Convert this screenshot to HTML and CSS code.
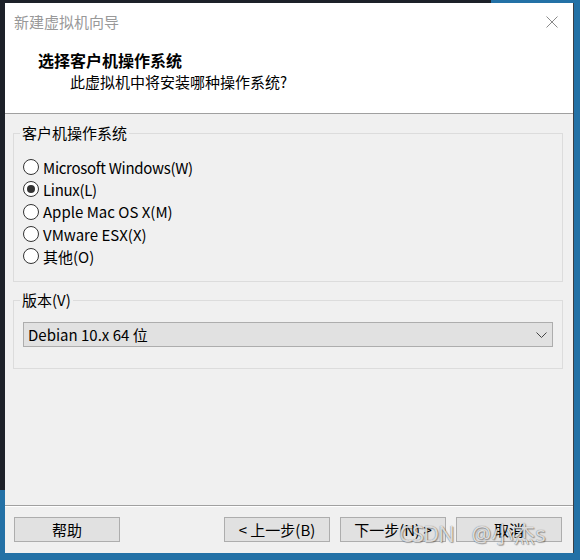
FILE: index.html
```html
<!DOCTYPE html>
<html lang="zh-CN">
<head>
<meta charset="utf-8">
<title>新建虚拟机向导</title>
<link rel="stylesheet" href="styles.css">
</head>
<body>
<div class="desktop">
  <div class="terminal"></div>
  <div class="window">
    <div class="head">
      <div class="titlebar">
        <span class="title">新建虚拟机向导</span>
        <svg class="close" width="12" height="12" viewBox="0 0 12 12"><path d="M0.5 0.5 L11.5 11.5 M11.5 0.5 L0.5 11.5" stroke="#8a8a8a" stroke-width="1" fill="none"/></svg>
      </div>
      <div class="heading">选择客户机操作系统</div>
      <div class="sub">此虚拟机中将安装哪种操作系统?</div>
    </div>
    <div class="body">
      <fieldset class="group g-os">
        <legend>客户机操作系统</legend>
        <div class="radio"><span class="dot"></span><span class="narrow">Microsoft Windows(W)</span></div>
        <div class="radio checked"><span class="dot"></span><span class="narrow">Linux(L)</span></div>
        <div class="radio"><span class="dot"></span><span>Apple Mac OS X(M)</span></div>
        <div class="radio"><span class="dot"></span><span>VMware ESX(X)</span></div>
        <div class="radio"><span class="dot"></span><span>其他(O)</span></div>
      </fieldset>
      <fieldset class="group g-ver">
        <legend>版本(V)</legend>
        <div class="combo">
          <span>Debian 10.x 64 位</span>
          <svg class="chev" width="11" height="6" viewBox="0 0 11 6"><path d="M0.5 0.5 L5.5 5.5 L10.5 0.5" stroke="#444" stroke-width="1" fill="none"/></svg>
        </div>
      </fieldset>
    </div>
    <div class="footer">
      <button class="btn">帮助</button>
      <span class="spacer"></span>
      <button class="btn">&lt; 上一步(B)</button>
      <button class="btn">下一步(N) &gt;</button>
      <button class="btn">取消</button>
    </div>
  </div>
  <div class="watermark"><span class="wm-csdn">CSDN</span> @小杰s</div>
</div>
</body>
</html>
```
FILE: styles.css
```css
* { box-sizing: border-box; }
html, body { margin: 0; padding: 0; }
body {
  width: 580px;
  height: 560px;
  overflow: hidden;
  font-family: "Noto Sans CJK SC", "Noto Sans", sans-serif;
  font-size: 15px;
  color: #000;
}
.desktop {
  position: relative;
  width: 580px;
  height: 560px;
  background: #2371a6;
}
.terminal {
  position: absolute;
  left: 0;
  top: 0;
  width: 491px;
  height: 490px;
  background: #1d2129;
}
.window {
  position: absolute;
  left: 5px;
  top: 3px;
  width: 568px;
  height: 550px;
  background: #f0f0f0;
  display: flex;
  flex-direction: column;
  box-shadow: 1px 0 0 #3a3f46;
}
.head {
  background: #fff;
  border-bottom: 1px solid #a0a0a0;
  padding-bottom: 20px;
}
.titlebar {
  height: 38px;
  display: flex;
  align-items: center;
  justify-content: space-between;
  padding: 0 15px 0 9px;
}
.title { color: #999; line-height: 20px; }
.close { display: block; }
.heading {
  margin-top: 8px;
  padding-left: 33px;
  font-weight: bold;
  font-size: 16px;
  line-height: 22px;
}
.sub {
  padding-left: 65px;
  line-height: 22px;
}
.body {
  flex: 1;
  display: flex;
  flex-direction: column;
  padding: 9px 10px 0 8px;
  gap: 8px;
}
.group {
  margin: 0;
  border: 1px solid #dcdcdc;
  min-width: 0;
}
.group legend {
  margin-left: -3px;
  padding: 0 2px;
  line-height: 20px;
}
.g-os { padding: 13px 9px 14px 9px; }
.g-ver { padding: 12px 9px 21px 9px; }
.radio {
  display: flex;
  align-items: center;
  gap: 4px;
  height: 22.3px;
}
.narrow { letter-spacing: -0.3px; }
.dot {
  width: 16px;
  height: 16px;
  border-radius: 50%;
  border: 1px solid #333;
  background: #fff;
  display: flex;
  align-items: center;
  justify-content: center;
}
.radio.checked .dot::after {
  content: "";
  width: 8px;
  height: 8px;
  border-radius: 50%;
  background: #333;
}
.combo {
  height: 25px;
  border: 1px solid #adadad;
  background: #e1e1e1;
  display: flex;
  align-items: center;
  justify-content: space-between;
  padding: 0 5px 0 4px;
}
.chev { display: block; }
.footer {
  border-top: 1px solid #a0a0a0;
  box-shadow: inset 0 1px 0 #fff;
  padding: 11px 11px 11px 9px;
  display: flex;
  align-items: center;
  gap: 10px;
}
.spacer { flex: 1; }
.btn {
  width: 106px;
  height: 25px;
  border: 1px solid #adadad;
  background: #e1e1e1;
  font-family: inherit;
  font-size: 15px;
  color: #000;
  padding: 0;
  line-height: 23px;
}
.watermark {
  position: absolute;
  left: 399px;
  top: 518px;
  font-family: "Noto Sans", "Noto Sans CJK SC", sans-serif;
  font-size: 22px;
  line-height: 30px;
  word-spacing: 12px;
  color: rgba(255, 255, 255, 0.8);
  text-shadow: 0 0 1px rgba(0, 0, 0, 0.6), 1px 1px 1px rgba(0, 0, 0, 0.3);
  white-space: nowrap;
}
.wm-csdn { letter-spacing: -1px; }
```
